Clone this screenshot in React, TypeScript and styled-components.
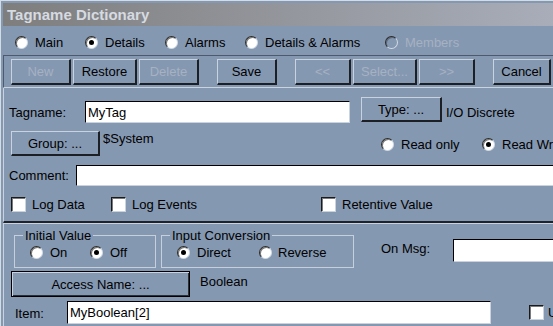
import React from 'react';
import styled, { createGlobalStyle } from 'styled-components';

const GlobalStyle = createGlobalStyle`
  body {
    margin: 0;
    background: #8598b1;
  }
  * {
    box-sizing: border-box;
  }
`;

const Viewport = styled.div`
  width: 553px;
  height: 326px;
  overflow: hidden;
  font-family: "Liberation Sans", Arial, sans-serif;
  font-size: 13px;
  color: #000;
`;

const Window = styled.div`
  width: 620px;
  height: 326px;
  background: #8598b1;
  border-top: 1px solid #d3dbe6;
  border-left: 1px solid #d3dbe6;
  padding: 2px 0 0 2px;
  display: flex;
  flex-direction: column;
`;

const TitleBar = styled.div`
  height: 23px;
  flex: none;
  display: flex;
  align-items: center;
  padding-left: 4px;
  background: linear-gradient(to right, #7e7e7e 0, #a8adb9 550px, #b0b5c2 100%);
  color: #d6dae1;
  font-size: 15px;
  font-weight: bold;
`;

const ModeRow = styled.div`
  height: 29px;
  flex: none;
  display: flex;
  align-items: center;
  padding: 3px 0 0 12px;
`;

const Option = styled.div<{ $w?: number; $gap?: number }>`
  display: flex;
  align-items: center;
  gap: ${p => p.$gap ?? 7}px;
  width: ${p => (p.$w ? `${p.$w}px` : 'auto')};
  flex: none;
  white-space: nowrap;
`;

const Radio = styled.span<{ $checked?: boolean; $disabled?: boolean }>`
  width: 13px;
  height: 13px;
  flex: none;
  border-radius: 50%;
  background: ${p => (p.$disabled ? 'transparent' : '#fff')};
  border: 1px solid;
  border-color: #2a2a2a #d2dae4 #d2dae4 #2a2a2a;
  box-shadow: inset 1px 1px 0 ${p => (p.$disabled ? '#5d6b7e' : '#777')};
  display: flex;
  align-items: center;
  justify-content: center;

  &::after {
    content: '';
    display: ${p => (p.$checked ? 'block' : 'none')};
    width: 5px;
    height: 5px;
    border-radius: 50%;
    background: #000;
  }
`;

const Check = styled.span`
  width: 15px;
  height: 15px;
  flex: none;
  background: #fff;
  border: 1px solid;
  border-color: #1a1a1a #cbd3de #cbd3de #1a1a1a;
  box-shadow: inset 1px 1px 0 #7a7a7a;
`;

const Caption = styled.span<{ $disabled?: boolean }>`
  color: ${p => (p.$disabled ? '#a6b1c2' : '#000')};
  line-height: 15px;
`;

const Toolbar = styled.div`
  height: 33px;
  flex: none;
  display: flex;
  gap: 18px;
  padding: 3px 0 0 7px;
  border-top: 1px solid #4d5a6c;
  border-left: 1px solid #4d5a6c;
  border-bottom: 1px solid #cbd3de;
`;

const ButtonGroup = styled.div`
  display: flex;
  gap: 2px;
`;

const Button = styled.button<{ $w: number; $h?: number; $default?: boolean }>`
  width: ${p => p.$w}px;
  height: ${p => p.$h ?? 26}px;
  flex: none;
  padding: 0;
  background: #8598b1;
  font: inherit;
  color: #000;
  border-style: solid;
  border-width: ${p => (p.$default ? '1px' : '1px 2px 2px 1px')};
  border-color: ${p => (p.$default ? '#000' : '#c9d2de #1c1f24 #1c1f24 #c9d2de')};
  box-shadow: ${p => (p.$default ? 'inset 1px 1px 0 #c9d2de, inset -1px -1px 0 #2a3038' : 'none')};

  &:disabled {
    color: #a6b1c2;
  }
`;

const DetailsPanel = styled.div`
  height: 135px;
  flex: none;
  display: flex;
  flex-direction: column;
  padding-top: 9px;
  border-left: 1px solid #c9d2de;
  border-bottom: 2px solid #1e232b;
`;

const Row = styled.div<{ $top?: number; $h: number; $align?: string }>`
  display: flex;
  align-items: ${p => p.$align ?? 'flex-start'};
  height: ${p => p.$h}px;
  margin-top: ${p => p.$top ?? 0}px;
  flex: none;
`;

const Label = styled.span<{ $left?: number; $w?: number; $top?: number }>`
  margin-left: ${p => p.$left ?? 0}px;
  margin-top: ${p => p.$top ?? 0}px;
  width: ${p => (p.$w ? `${p.$w}px` : 'auto')};
  flex: none;
  line-height: 15px;
  white-space: nowrap;
`;

const TextBox = styled.input<{ $w?: number; $h: number; $top?: number; $left?: number }>`
  width: ${p => (p.$w ? `${p.$w}px` : 'auto')};
  flex: ${p => (p.$w ? 'none' : '1')};
  min-width: 0;
  height: ${p => p.$h}px;
  margin-top: ${p => p.$top ?? 0}px;
  margin-left: ${p => p.$left ?? 0}px;
  padding: 0 2px;
  background: #fff;
  border: 1px solid;
  border-color: #000 #cbd3de #cbd3de #000;
  font: inherit;
  color: #000;
  outline: none;
`;

const BottomPanel = styled.div`
  flex: 1;
  display: flex;
  flex-direction: column;
  border-top: 1px solid #c9d2de;
  border-left: 1px solid #c9d2de;
`;

const GroupBox = styled.fieldset<{ $w: number; $left: number }>`
  width: ${p => p.$w}px;
  height: 40px;
  margin: 0 0 0 ${p => p.$left}px;
  padding: 2px 0 8px 15px;
  min-width: 0;
  flex: none;
  border: 1px solid #c6cfdb;
  display: flex;
  align-items: center;

  legend {
    margin-left: -7px;
    padding: 0 2px;
    line-height: 15px;
    font-size: 13px;
  }
`;

const SpacedText = styled.span<{ $w: number; $left: number }>`
  width: ${p => p.$w}px;
  margin-left: ${p => p.$left}px;
  flex: none;
  line-height: 15px;
`;

export default function App() {
  return (
    <>
      <GlobalStyle />
      <Viewport>
        <Window>
          <TitleBar>Tagname Dictionary</TitleBar>

          <ModeRow>
            <Option $w={70}><Radio /><Caption>Main</Caption></Option>
            <Option $w={80}><Radio $checked /><Caption>Details</Caption></Option>
            <Option $w={80}><Radio /><Caption>Alarms</Caption></Option>
            <Option $w={140}><Radio /><Caption>Details &amp; Alarms</Caption></Option>
            <Option><Radio $disabled /><Caption $disabled>Members</Caption></Option>
          </ModeRow>

          <Toolbar>
            <ButtonGroup>
              <Button $w={60} disabled>New</Button>
              <Button $w={64}>Restore</Button>
              <Button $w={60} disabled>Delete</Button>
            </ButtonGroup>
            <ButtonGroup>
              <Button $w={60}>Save</Button>
            </ButtonGroup>
            <ButtonGroup>
              <Button $w={56} disabled>&lt;&lt;</Button>
              <Button $w={64} disabled>Select...</Button>
              <Button $w={56} disabled>&gt;&gt;</Button>
            </ButtonGroup>
            <ButtonGroup>
              <Button $w={58}>Cancel</Button>
            </ButtonGroup>
          </Toolbar>

          <DetailsPanel>
            <Row $h={26}>
              <Label $left={5} $w={76} $top={8}>Tagname:</Label>
              <TextBox $w={265} $h={22} $top={4} readOnly value="MyTag" />
              <Button $w={81} $h={25} style={{ marginLeft: 11 }}>Type: ...</Button>
              <Label $left={4} $top={8}>I/O Discrete</Label>
            </Row>

            <Row $h={25} $top={8}>
              <Button $w={89} $h={25} style={{ marginLeft: 7 }}>Group: ...</Button>
              <SpacedText $w={278} $left={3}>$System</SpacedText>
              <Row $h={13} $top={7} $align="center">
                <Option $w={101}><Radio /><Caption>Read only</Caption></Option>
                <Option><Radio $checked /><Caption>Read Write</Caption></Option>
              </Row>
            </Row>

            <Row $h={21} $top={9} $align="center">
              <Label $left={5} $w={67}>Comment:</Label>
              <TextBox $h={21} readOnly value="" />
            </Row>

            <Row $h={15} $top={11} $align="center">
              <Option $w={100} $gap={6} style={{ marginLeft: 7 }}><Check /><Caption>Log Data</Caption></Option>
              <Option $w={210} $gap={6}><Check /><Caption>Log Events</Caption></Option>
              <Option $gap={6}><Check /><Caption>Retentive Value</Caption></Option>
            </Row>
          </DetailsPanel>

          <BottomPanel>
            <Row $h={40} $top={4}>
              <GroupBox $w={142} $left={10}>
                <legend>Initial Value</legend>
                <Option $w={60}><Radio /><Caption>On</Caption></Option>
                <Option><Radio $checked /><Caption>Off</Caption></Option>
              </GroupBox>
              <GroupBox $w={193} $left={5}>
                <legend>Input Conversion</legend>
                <Option $w={82}><Radio $checked /><Caption>Direct</Caption></Option>
                <Option $gap={6}><Radio /><Caption>Reverse</Caption></Option>
              </GroupBox>
              <Label $left={27} $w={72} $top={13}>On Msg:</Label>
              <TextBox $h={23} $top={11} readOnly value="" />
            </Row>

            <Row $h={26} $top={3}>
              <Button $w={179} $default style={{ marginLeft: 7 }}>Access Name: ...</Button>
              <Label $left={10} $top={3}>Boolean</Label>
            </Row>

            <Row $h={23} $top={4} $align="center">
              <Label $left={11} $w={52} $top={2}>Item:</Label>
              <TextBox $w={424} $h={23} readOnly value="MyBoolean[2]" />
              <Option $gap={4} style={{ marginLeft: 38 }}><Check /><Caption>Use Tagname as Item Name</Caption></Option>
            </Row>
          </BottomPanel>
        </Window>
      </Viewport>
    </>
  );
}
